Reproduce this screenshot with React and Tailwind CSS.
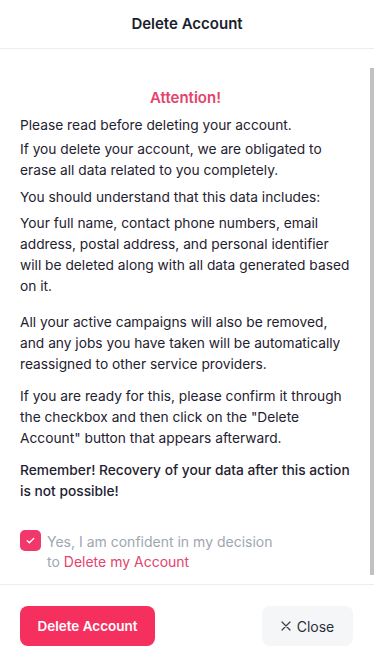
import React from 'react';

const App = () => {
    return (
        <div className="h-[665px] w-full bg-white flex flex-col font-['Inter',sans-serif] text-[#1f2230]">

            {/* Header */}
            <div className="h-[49px] shrink-0 border-b border-[#eceef1] flex items-center justify-center">
                <h1 className="text-[15px] font-semibold text-[#1b1e2e]">Delete Account</h1>
            </div>

            {/* Body */}
            <div className="flex-1 flex min-h-0">
                <div className="flex-1 pl-5 pr-[19px] pt-[37px] pb-4 text-[13.75px] leading-[21px]">
                    <h2 className="text-center text-[15px] leading-[24px] font-semibold text-[#e4436b] mb-[5px]">Attention!</h2>
                    <p className="mb-[3px]">Please read before deleting your account.</p>
                    <p className="mb-[6px]">If you delete your account, we are obligated to erase all data related to you completely.</p>
                    <p className="mb-[5px]">You should understand that this data includes:</p>
                    <p className="mb-[15px]">Your full name, contact phone numbers, email address, postal address, and personal identifier will be deleted along with all data generated based on it.</p>
                    <p className="mb-[11px]">All your active campaigns will also be removed, and any jobs you have taken will be automatically reassigned to other service providers.</p>
                    <p className="mb-[11px]">If you are ready for this, please confirm it through the checkbox and then click on the "Delete Account" button that appears afterward.</p>
                    <p className="font-medium">Remember! Recovery of your data after this action is not possible!</p>

                    <label className="mt-[30px] flex items-start gap-[6px] leading-[20px]">
                        <span className="mt-[-2px] w-[21px] h-[21px] shrink-0 rounded-[5px] bg-[#f2386a] flex items-center justify-center">
                            <svg width="11" height="11" viewBox="0 0 24 24" fill="none" stroke="white" strokeWidth="3" strokeLinecap="round" strokeLinejoin="round">
                                <path d="M5 12.5l4.5 4.5L19 7.5" />
                            </svg>
                        </span>
                        <span className="text-[#a0a6b1] text-[14px]">
                            Yes, I am confident in my decision<br />
                            to <span className="text-[#e4436b]">Delete my Account</span>
                        </span>
                    </label>
                </div>
                {/* scrollbar */}
                <div className="w-[4px] shrink-0 pt-[19px] pb-[9px] flex">
                    <div className="flex-1 bg-[#c1c1c1]" />
                </div>
            </div>

            {/* Footer */}
            <div className="h-[81px] shrink-0 border-t border-[#eceef1] flex items-start justify-between pl-5 pr-[21px] pt-[21px]">
                <button className="h-[40px] w-[135px] rounded-[8px] bg-[#f5305f] text-white text-[13.5px] font-semibold">Delete Account</button>
                <button className="h-[40px] w-[91px] rounded-[8px] bg-[#f5f6f8] text-[#2a2d3a] text-[14px] flex items-center justify-center gap-[6px]">
                    <svg width="10" height="10" viewBox="0 0 10 10" stroke="#3a3d48" strokeWidth="1.2" strokeLinecap="round">
                        <path d="M1 1l8 8M9 1l-8 8" />
                    </svg>
                    Close
                </button>
            </div>
        </div>
    );
};

export default App;
